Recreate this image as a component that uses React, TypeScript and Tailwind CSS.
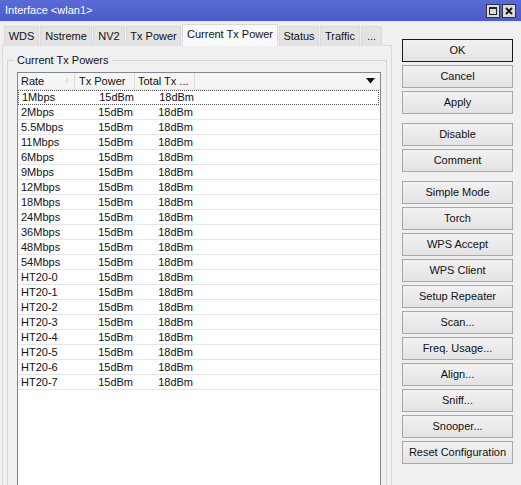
import React from 'react';

const rows: [string, string, string][] = [
  ['1Mbps', '15dBm', '18dBm'],
  ['2Mbps', '15dBm', '18dBm'],
  ['5.5Mbps', '15dBm', '18dBm'],
  ['11Mbps', '15dBm', '18dBm'],
  ['6Mbps', '15dBm', '18dBm'],
  ['9Mbps', '15dBm', '18dBm'],
  ['12Mbps', '15dBm', '18dBm'],
  ['18Mbps', '15dBm', '18dBm'],
  ['24Mbps', '15dBm', '18dBm'],
  ['36Mbps', '15dBm', '18dBm'],
  ['48Mbps', '15dBm', '18dBm'],
  ['54Mbps', '15dBm', '18dBm'],
  ['HT20-0', '15dBm', '18dBm'],
  ['HT20-1', '15dBm', '18dBm'],
  ['HT20-2', '15dBm', '18dBm'],
  ['HT20-3', '15dBm', '18dBm'],
  ['HT20-4', '15dBm', '18dBm'],
  ['HT20-5', '15dBm', '18dBm'],
  ['HT20-6', '15dBm', '18dBm'],
  ['HT20-7', '15dBm', '18dBm'],
];

// tab label + fixed width (px)
const tabs: { label: string; w: string; active?: boolean }[] = [
  { label: 'WDS', w: 'w-[35px]' },
  { label: 'Nstreme', w: 'w-[52px]' },
  { label: 'NV2', w: 'w-[32px]' },
  { label: 'Tx Power', w: 'w-[55px]' },
  { label: 'Current Tx Power', w: 'w-[96px]', active: true },
  { label: 'Status', w: 'w-[40px]' },
  { label: 'Traffic', w: 'w-[40px]' },
  { label: '...', w: 'w-[21px]' },
];

const buttonGroups: string[][] = [
  ['OK', 'Cancel', 'Apply'],
  ['Disable', 'Comment'],
  [
    'Simple Mode',
    'Torch',
    'WPS Accept',
    'WPS Client',
    'Setup Repeater',
    'Scan...',
    'Freq. Usage...',
    'Align...',
    'Sniff...',
    'Snooper...',
    'Reset Configuration',
  ],
];

function WinButton({ label, primary }: { label: string; primary?: boolean }) {
  return (
    <div
      className={
        'h-[23px] w-[111px] flex items-center justify-center bg-gradient-to-b from-[#f2f2f2] to-[#e3e3e3] text-[#111] ' +
        (primary ? 'border border-[#1a1a1a]' : 'border border-[#a8a8a8]')
      }
    >
      {label}
    </div>
  );
}

export default function App() {
  return (
    <div className="w-[521px] h-[485px] overflow-hidden bg-[#f0f0f0] text-[11px] text-[#111] font-['Liberation_Sans',Arial,sans-serif] flex flex-col">
      {/* title bar */}
      <div className="h-[21px] shrink-0 bg-gradient-to-b from-[#5a6bd6] to-[#4b5bcb] flex items-center justify-between pl-[5px] pr-[5px]">
        <span className="text-white text-[11px] leading-none">Interface &lt;wlan1&gt;</span>
        <div className="flex gap-[2px]">
          <div className="w-[14px] h-[14px] bg-[#dcdcdc] border border-[#333] flex items-center justify-center">
            <div className="w-[8px] h-[8px] border border-[#222] border-t-2" />
          </div>
          <div className="w-[14px] h-[14px] bg-[#dcdcdc] border border-[#333] flex items-center justify-center">
            <svg width="8" height="8" viewBox="0 0 8 8">
              <path d="M1 1 L7 7 M7 1 L1 7" stroke="#111" strokeWidth="1.8" />
            </svg>
          </div>
        </div>
      </div>

      <div className="flex flex-1 min-h-0">
        {/* left: tabs + panel */}
        <div className="w-[392px] shrink-0 flex flex-col pl-[2px] pt-[3px]">
          <div className="flex items-end pl-[2px] gap-[1px] h-[22px] relative z-10">
            {tabs.map((t) => (
              <div
                key={t.label}
                className={
                  t.w +
                  ' flex items-center justify-center border border-[#d9d9d9] ' +
                  (t.active
                    ? 'h-[22px] bg-[#f9f9f9] border-b-[#f9f9f9] pb-[2px]'
                    : 'h-[20px] bg-[#e3e3e3] border-b-0')
                }
              >
                {t.label}
              </div>
            ))}
          </div>

          <div className="flex-1 min-h-0 border-l border-t border-r border-[#d9d9d9] bg-[#f0f0f0] -mt-[1px] pl-[4px] pr-[4px] pt-[14px]">
            {/* group box */}
            <div className="relative h-full border-l border-t border-r border-[#d5d5d5] pt-[11px] pl-[9px]">
              <div className="absolute -top-[7px] left-[6px] bg-[#f0f0f0] px-[3px] leading-[13px]">
                Current Tx Powers
              </div>

              {/* table */}
              <div className="w-[364px] h-[420px] border border-[#828790] bg-white flex flex-col">
                <div className="h-[17px] shrink-0 flex items-stretch bg-[#f5f5f5] border-b border-[#e5e5e5]">
                  <div className="w-[57px] flex items-center justify-between pl-[3px] pr-[6px] border-r border-[#dcdcdc]">
                    <span>Rate</span>
                    <span className="text-[#b8b8b8] text-[8px]">/</span>
                  </div>
                  <div className="w-[60px] flex items-center pl-[4px] border-r border-[#dcdcdc]">Tx Power</div>
                  <div className="w-[60px] flex items-center pl-[3px] border-r border-[#dcdcdc]">Total Tx ...</div>
                  <div className="flex-1 flex items-center justify-end pr-[5px]">
                    <svg width="9" height="6" viewBox="0 0 9 6">
                      <path d="M0 0 H9 L4.5 5.5 Z" fill="#111" />
                    </svg>
                  </div>
                </div>

                {rows.map(([rate, tx, total], i) => (
                  <div
                    key={rate}
                    className={
                      'h-[15px] shrink-0 w-[361px] flex items-center ' +
                      (i === 0 ? 'border border-dotted border-[#555]' : 'border-b border-[#e6e6e6]')
                    }
                  >
                    <div className="w-[57px] pl-[3px]">{rate}</div>
                    <div className="w-[60px] text-right pr-[2px]">{tx}</div>
                    <div className="w-[60px] text-right pr-[2px]">{total}</div>
                  </div>
                ))}
              </div>
            </div>
          </div>
        </div>

        {/* right: buttons */}
        <div className="flex flex-col pl-[10px] pt-[18px] gap-[9px]">
          {buttonGroups.map((g, gi) => (
            <div key={gi} className="flex flex-col gap-[3px]">
              {g.map((b) => (
                <WinButton key={b} label={b} primary={b === 'OK'} />
              ))}
            </div>
          ))}
        </div>
      </div>
    </div>
  );
}
